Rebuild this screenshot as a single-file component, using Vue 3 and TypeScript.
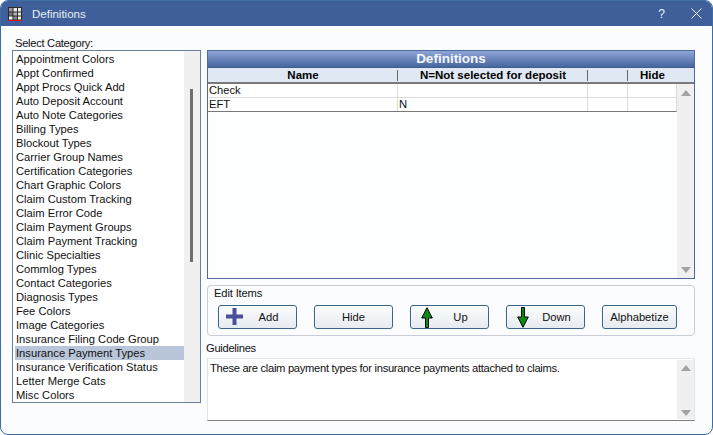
<script setup lang="ts">
const categories: string[] = [
  'Appointment Colors','Appt Confirmed','Appt Procs Quick Add','Auto Deposit Account','Auto Note Categories',
  'Billing Types','Blockout Types','Carrier Group Names','Certification Categories','Chart Graphic Colors',
  'Claim Custom Tracking','Claim Error Code','Claim Payment Groups','Claim Payment Tracking','Clinic Specialties',
  'Commlog Types','Contact Categories','Diagnosis Types','Fee Colors','Image Categories',
  'Insurance Filing Code Group','Insurance Payment Types','Insurance Verification Status','Letter Merge Cats','Misc Colors'
]
const selected = 'Insurance Payment Types'
const rows = [
  { name: 'Check', n: '' },
  { name: 'EFT', n: 'N' }
]
</script>

<template>
  <div class="window">
    <header class="titlebar">
      <svg class="appicon" width="14" height="14" viewBox="0 0 14 14">
        <rect x="0" y="0" width="14" height="14" fill="#2b2b2b"/>
        <rect x="1" y="1" width="3.5" height="3.5" fill="#9a9a9a"/><rect x="5.5" y="1" width="3.5" height="3.5" fill="#e8e8e8"/><rect x="10" y="1" width="3" height="3.5" fill="#e8e8e8"/>
        <rect x="1" y="5.5" width="3.5" height="3" fill="#777"/><rect x="5.5" y="5.5" width="3.5" height="3" fill="#b5b5b5"/><rect x="10" y="5.5" width="3" height="3" fill="#e8e8e8"/>
        <rect x="1" y="9.5" width="3.5" height="3" fill="#f4f4f4"/><rect x="5.5" y="9.5" width="3.5" height="3" fill="#8a8a8a"/><rect x="10" y="9.5" width="3" height="3" fill="#f4f4f4"/>
        <rect x="0" y="13" width="14" height="1" fill="#e01010"/>
      </svg>
      <span class="title">Definitions</span>
      <span class="help">?</span>
      <svg class="close" width="11" height="11" viewBox="0 0 11 11"><path d="M.5.5l10 10M10.5.5l-10 10" stroke="#f2f5fa" stroke-width="1" fill="none"/></svg>
    </header>

    <div class="body">
      <section class="left">
        <label class="cat-label">Select Category:</label>
        <div class="listbox">
          <ul class="items">
            <li v-for="c in categories" :key="c" :class="{ sel: c === selected }">{{ c }}</li>
          </ul>
          <div class="list-scroll"><div class="thumb"></div></div>
        </div>
      </section>

      <section class="right">
        <div class="grid">
          <div class="grid-title">Definitions</div>
          <div class="grid-head">
            <div class="c1">Name</div>
            <div class="c2">N=Not selected for deposit</div>
            <div class="c3"></div>
            <div class="c4">Hide</div>
          </div>
          <div class="grid-main">
            <div class="grid-rows">
              <div v-for="r in rows" :key="r.name" class="grid-row">
                <div class="c1">{{ r.name }}</div>
                <div class="c2">{{ r.n }}</div>
                <div class="c3"></div>
                <div class="c4"></div>
              </div>
            </div>
            <div class="vscroll">
              <span class="tri up"></span>
              <span class="tri down"></span>
            </div>
          </div>
        </div>

        <fieldset class="group">
          <legend>Edit Items</legend>
          <div class="buttons">
            <button class="btn b-add">
              <svg width="17" height="17" viewBox="0 0 17 17"><path d="M0 6.5h17v4H0zM6.5 0h4v17h-4z" fill="#4a4f9c"/></svg>
              <span>Add</span>
            </button>
            <button class="btn b-hide"><span>Hide</span></button>
            <button class="btn b-up">
              <svg width="12" height="21" viewBox="0 0 12 21"><path d="M6 .7L11.3 11H7.5v9.5h-3V11H.7z" fill="#0a8a12" stroke="#000" stroke-width="1"/></svg>
              <span>Up</span>
            </button>
            <button class="btn b-down">
              <svg width="12" height="21" viewBox="0 0 12 21"><path d="M6 20.3L11.3 10H7.5V.5h-3V10H.7z" fill="#0a8a12" stroke="#000" stroke-width="1"/></svg>
              <span>Down</span>
            </button>
            <button class="btn b-alpha"><span>Alphabetize</span></button>
          </div>
        </fieldset>

        <div class="guide-label">Guidelines</div>
        <div class="guide">
          <p>These are claim payment types for insurance payments attached to claims.</p>
          <div class="vscroll small">
            <span class="tri up"></span>
            <span class="tri down"></span>
          </div>
        </div>
      </section>
    </div>
  </div>
</template>

<style scoped>
.window {
  width: 713px;
  height: 435px;
  box-sizing: border-box;
  border: 1px solid #3b6ea5;
  border-radius: 8px;
  background: #fbfcfe;
  overflow: hidden;
  font-family: "Liberation Sans", Arial, sans-serif;
  font-size: 11.2px;
  color: #111;
  display: flex;
  flex-direction: column;
}
.titlebar {
  height: 25px;
  flex: none;
  background: #3f5f9b;
  color: #e9eef6;
  display: flex;
  align-items: center;
  padding: 0 10px 0 7px;
}
.appicon { margin: 1px 10px 0 0; }
.title { flex: 1; font-size: 11.5px; }
.help { font-size: 12px; margin-right: 26px; }
.body {
  flex: 1;
  display: flex;
  padding: 9px 17px 13px 11px;
  gap: 6px;
}
.left { width: 189px; flex: none; display: flex; flex-direction: column; }
.cat-label { height: 15px; line-height: 16px; padding-left: 3px; letter-spacing: -0.3px; }
.listbox {
  height: 353px;
  box-sizing: border-box;
  border: 1px solid #6b7f9c;
  background: #fff;
  display: flex;
}
.items { list-style: none; margin: 0; padding: 1px 0 0 2px; flex: 1; overflow: hidden; }
.items li { height: 14px; line-height: 14px; padding-left: 1px; white-space: nowrap; }
.items li.sel { background: #b9c6da; }
.list-scroll { width: 16px; flex: none; background: #f0f0f0; position: relative; }
.thumb { position: absolute; left: 6px; top: 38px; width: 3px; height: 173px; background: #6f6f6f; }
.right { flex: 1; min-width: 0; display: flex; flex-direction: column; padding-top: 15px; }
.grid {
  height: 229px;
  box-sizing: border-box;
  border: 1px solid #4e6a9c;
  background: #fdfefe;
  display: flex;
  flex-direction: column;
}
.grid-title {
  height: 16px;
  line-height: 16px;
  text-align: center;
  font-weight: 700;
  font-size: 13.5px;
  color: #f4f6fb;
  background: linear-gradient(#8ea5d8, #47659f);
  border-bottom: 1px solid #3f5f8c;
}
.grid-head {
  height: 14px;
  display: grid;
  grid-template-columns: 190px 190px 40px 1fr;
  background: #e0e9f3;
  border-bottom: 2px solid #7a7a7a;
  font-size: 11.5px;
  font-weight: 700;
  line-height: 14px;
  text-align: center;
  color: #000;
  padding-right: 17px;
}
.grid-head > div { position: relative; }
.grid-head .c1::after, .grid-head .c2::after, .grid-head .c3::after {
  content: "";
  position: absolute;
  right: 0;
  top: 2px;
  bottom: 1px;
  width: 1px;
  background: #666;
}
.grid-main { flex: 1; display: flex; min-height: 0; }
.grid-rows { flex: 1; }
.grid-row {
  height: 14px;
  box-sizing: border-box;
  display: grid;
  grid-template-columns: 190px 190px 40px 1fr;
  line-height: 13px;
  background: #fff;
  border-right: 1px solid #d9d9d9;
  border-bottom: 1px solid #dcdcdc;
}
.grid-row:last-child { border-bottom: 1px solid #777; }
.grid-row > div { border-right: 1px solid #dcdcdc; padding-left: 1px; }
.grid-row > .c4 { border-right: 0; }
.vscroll {
  width: 17px;
  flex: none;
  background: #f0f0f0;
  display: flex;
  flex-direction: column;
  justify-content: space-between;
  align-items: center;
  padding: 6px 0 5px;
  box-sizing: border-box;
}
.tri { width: 0; height: 0; border-left: 5px solid transparent; border-right: 5px solid transparent; }
.tri.up { border-bottom: 6px solid #a3a3a3; }
.tri.down { border-top: 6px solid #a3a3a3; }
.group {
  margin: 6px 0 0;
  padding: 0 17px 0 10px;
  height: 51px;
  box-sizing: border-box;
  border: 1px solid #c9cdd2;
  border-radius: 4px;
  position: relative;
  min-inline-size: 0;
}
.group legend {
  position: absolute;
  left: 6px;
  top: 0;
  padding: 0;
  line-height: 14px;
  letter-spacing: -0.15px;
}
.buttons { display: flex; gap: 17px; padding-top: 19px; }
.btn {
  height: 24px;
  width: 79px;
  box-sizing: border-box;
  padding: 0;
  border: 1px solid #3f6488;
  border-radius: 3px;
  background: linear-gradient(#fbfcfd, #e6ebf0);
  font: inherit;
  color: #111;
  position: relative;
  display: flex;
  align-items: center;
  justify-content: center;
}
.btn svg { position: absolute; top: 1px; }
.b-add svg { left: 7px; top: 2px; }
.b-add span { margin-left: 22px; }
.b-up svg { left: 10px; }
.b-up span { margin-left: 22px; }
.b-down svg { left: 10px; }
.b-down span { margin-left: 22px; }
.b-alpha { width: 75px; }
.guide-label { height: 16px; margin-top: 1px; line-height: 22px; margin-left: -1px; letter-spacing: -0.3px; }
.guide {
  margin-top: 5px;
  height: 63px;
  box-sizing: border-box;
  border: 1px solid #e2e4e8;
  border-bottom: 1px solid #7f7f7f;
  background: #fff;
  display: flex;
  border-radius: 1px;
}
.guide p { flex: 1; margin: 0; padding: 2px 2px; line-height: 14px; letter-spacing: -0.3px; }
.vscroll.small { margin: 1px 0; padding: 5px 0 3px; }
</style>
